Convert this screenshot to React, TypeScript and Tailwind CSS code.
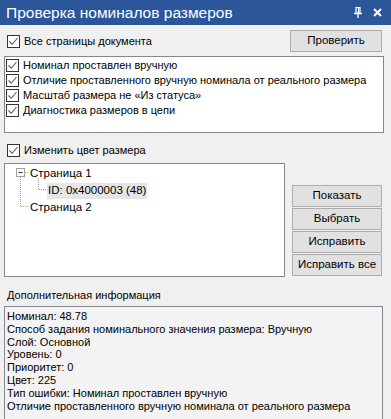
import React from 'react';

const font = "font-['Liberation_Sans',Arial,sans-serif]";

function Check({ checked = true }: { checked?: boolean }) {
  return (
    <span className="w-[13px] h-[13px] border border-[#333333] bg-white flex items-center justify-center shrink-0">
      {checked && (
        <svg width="11" height="11" viewBox="0 0 11 11">
          <path d="M1.5 5.5 L4.2 8.3 L9.5 2" fill="none" stroke="#5a5a5a" strokeWidth="1.1" />
        </svg>
      )}
    </span>
  );
}

function Btn({ label }: { label: string }) {
  return (
    <button className="w-[90px] h-[22px] bg-[#e1e1e1] border border-[#adadad] text-[11.5px] text-black flex items-center justify-center leading-none">
      {label}
    </button>
  );
}

const checks = [
  'Номинал проставлен вручную',
  'Отличие проставленного вручную номинала от реального размера',
  'Масштаб размера не «Из статуса»',
  'Диагностика размеров в цепи',
];

const info = [
  'Номинал: 48.78',
  'Способ задания номинального значения размера: Вручную',
  'Слой: Основной',
  'Уровень: 0',
  'Приоритет: 0',
  'Цвет: 225',
  'Тип ошибки: Номинал проставлен вручную',
  'Отличие проставленного вручную номинала от реального размера',
];

export default function App() {
  return (
    <div className={`w-[391px] h-[419px] bg-[#f0f0f0] overflow-hidden text-black ${font}`}>
      {/* Title bar */}
      <header className="h-[25px] bg-[#2b579a] flex items-center justify-between pl-[6px] pr-[9px]">
        <span className="text-white text-[15.5px] leading-none">Проверка номиналов размеров</span>
        <div className="flex items-center gap-[11px]">
          <svg width="8" height="11" viewBox="0 0 8 11">
            <path d="M2 0.5 H6 V6 H2 Z" fill="none" stroke="#fff" strokeWidth="1.2" />
            <path d="M4.5 1 V6" stroke="#fff" strokeWidth="1.4" />
            <path d="M0 6.5 H8" stroke="#fff" strokeWidth="1.4" />
            <path d="M4 7 V11" stroke="#fff" strokeWidth="1.4" />
          </svg>
          <svg width="9" height="9" viewBox="0 0 9 9">
            <path d="M1 1 L8 8 M8 1 L1 8" stroke="#fff" strokeWidth="2" />
          </svg>
        </div>
      </header>

      {/* All pages row */}
      <div className="mt-[5px] h-[22px] flex items-center justify-between pl-[7px] pr-[9px]">
        <label className="flex items-center gap-[4px] text-[11px]">
          <Check />
          <span>Все страницы документа</span>
        </label>
        <button className="w-[92px] h-[22px] bg-[#e1e1e1] border border-[#adadad] text-[11.5px] flex items-center justify-center leading-none">
          Проверить
        </button>
      </div>

      {/* Checks list */}
      <div className="mt-[4px] mx-[4px] w-[380px] h-[77px] border border-[#828790] bg-white pt-[1px] pl-[1px]">
        {checks.map((c) => (
          <div key={c} className="h-[15px] flex items-center gap-[4px] text-[11px] whitespace-nowrap">
            <Check />
            <span className="leading-none">{c}</span>
          </div>
        ))}
      </div>

      {/* Change colour */}
      <label className="mt-[10px] h-[15px] flex items-center gap-[4px] pl-[7px] text-[11px]">
        <Check />
        <span>Изменить цвет размера</span>
      </label>

      <div className="mt-[5px] flex pl-[4px]">
        {/* Tree */}
        <div className="w-[281px] h-[114px] border border-[#828790] bg-white text-[11.5px] relative">
          <svg className="absolute left-0 top-0" width="60" height="50">
            <g stroke="#a0a0a0" strokeDasharray="1 1" strokeWidth="1" fill="none">
              <path d="M15.5 13 V42.5 H23" />
              <path d="M20 8.5 H24" />
              <path d="M33.5 14 V25.5 H41" />
            </g>
            <rect x="11.5" y="4.5" width="8" height="8" fill="#fff" stroke="#a0a0a0" />
            <path d="M13.5 8.5 H17.5" stroke="#333" />
          </svg>
          <div className="pt-[1px]">
            <div className="h-[17px] flex items-center pl-[25px]">Страница 1</div>
            <div className="h-[17px] flex items-center pl-[42px]">
              <span className="bg-[#e5e5e5] px-[1px] h-[16px] flex items-center">ID: 0x4000003 (48)</span>
            </div>
            <div className="h-[17px] flex items-center pl-[25px]">Страница 2</div>
          </div>
        </div>

        {/* Action buttons */}
        <div className="ml-[7px] pt-[22px] flex flex-col gap-[1px]">
          <Btn label="Показать" />
          <Btn label="Выбрать" />
          <Btn label="Исправить" />
          <Btn label="Исправить все" />
        </div>
      </div>

      {/* Additional info */}
      <div className="mt-[13px] pl-[7px] text-[11px] leading-none">Дополнительная информация</div>
      <div className="mt-[5px] mx-[4px] w-[379px] h-[130px] border border-[#828790] bg-[#f3f3f3] pl-[2px] pt-[3px] text-[11px]">
        {info.map((l) => (
          <div key={l} className="h-[12.8px] leading-[12.8px] whitespace-nowrap">{l}</div>
        ))}
      </div>
    </div>
  );
}
